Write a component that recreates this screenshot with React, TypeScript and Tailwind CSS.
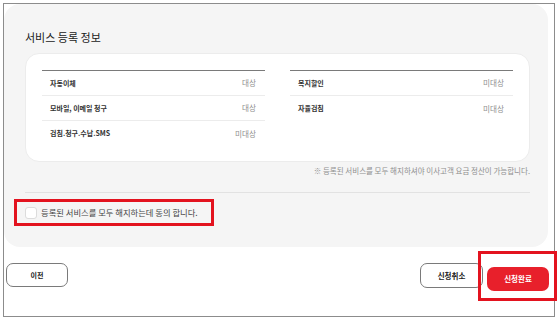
import React from "react";

const leftRows = [
  { label: "자동이체", value: "대상" },
  { label: "모바일, 이메일 청구", value: "대상" },
  { label: "검침.청구.수납.SMS", value: "미대상" },
];
const rightRows = [
  { label: "복지할인", value: "미대상" },
  { label: "자율검침", value: "미대상" },
];

function Table({ rows }: { rows: { label: string; value: string }[] }) {
  return (
    <div className="border-t border-[#7a7a7a]">
      {rows.map((r, i) => (
        <div
          key={r.label}
          className={
            "flex h-[25px] items-center justify-between pl-[8px] pr-[9px] " +
            (i < rows.length - 1 ? "border-b border-[#ececec]" : "")
          }
        >
          <span className="text-[7px] font-bold text-[#333]">{r.label}</span>
          <span className="text-[7.6px] text-[#8f8f8f]">{r.value}</span>
        </div>
      ))}
    </div>
  );
}

export default function App() {
  return (
    <div className="w-[559px] h-[321px] bg-white pt-[3px] pl-[3px] font-['Noto_Sans_CJK_KR','Noto_Sans',sans-serif]">
      <div className="relative w-[552px] h-[314px] border border-[#8c8c8c] bg-white">
        <div className="w-[544px] h-[243px] rounded-[16px] bg-[#f5f5f5] pt-[23px] pl-[21px] flex flex-col">
          <div className="text-[11px] leading-[20px] h-[20px] text-[#1a1a1a]">서비스 등록 정보</div>
          <div className="mt-[6px] w-[505px] h-[109px] rounded-[14px] border border-[#ececec] bg-white pt-[16px] px-[16px]">
            <div className="grid grid-cols-2 gap-[25px]">
              <Table rows={leftRows} />
              <Table rows={rightRows} />
            </div>
          </div>
          <div className="mt-[4px] w-[505px] text-right text-[7.5px] leading-[10px] text-[#8f8f8f]">
            ※ 등록된 서비스를 모두 해지하셔야 이사고객 요금 정산이 가능합니다.
          </div>
          <div className="mt-[16px] w-[505px] h-px bg-[#e2e2e2]" />
          <div className="mt-[6px] -ml-[11px] w-[200px] h-[27px] border-[3px] border-[#e3131f] flex items-center pl-[8px] gap-[4px]">
            <span className="w-[12px] h-[12px] rounded-[3px] border border-[#dcdcdc] bg-white" />
            <span className="text-[8.3px] text-[#444]">등록된 서비스를 모두 해지하는데 동의 합니다.</span>
          </div>
        </div>
        <div className="mt-[16px] flex justify-between pl-[2px] pr-[5px]">
          <button className="w-[62px] h-[24px] rounded-[7px] border border-[#7a7a7a] bg-white text-[7px] font-bold text-[#222]">
            이전
          </button>
          <div className="flex gap-[4px]">
            <button className="w-[63px] h-[25px] rounded-[7px] border border-[#7a7a7a] bg-white text-[7.5px] font-bold text-[#222]">
              신청취소
            </button>
            <div className="relative">
              <button className="w-[62px] h-[24px] rounded-[7px] bg-[#e8202b] text-[7.5px] font-bold text-white">
                신청완료
              </button>
              <span className="absolute -left-[9px] -right-[8px] -top-[12px] -bottom-[10px] border-[3px] border-[#e3131f]" />
            </div>
          </div>
        </div>
      </div>
    </div>
  );
}
